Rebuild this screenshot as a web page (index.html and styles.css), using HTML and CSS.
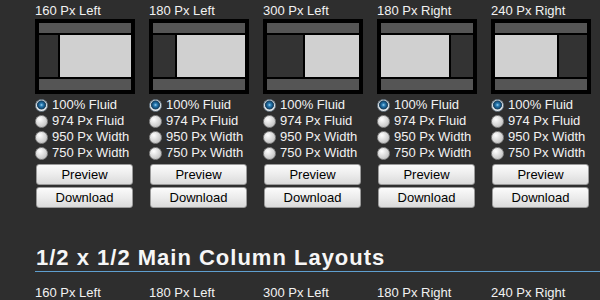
FILE: index.html
```html
<!DOCTYPE html>
<html lang="en">
<head>
    <meta charset="UTF-8">
    <title>Layouts</title>
    <link rel="stylesheet" href="styles.css">
</head>
<body>
<div id="page">
    <div class="row">
        <div class="card">
            <div class="label">160 Px Left</div>
            <div class="frame"><div class="top"></div><div class="mid"><div class="side w160"></div><div class="main"></div></div><div class="bot"></div></div>
            <ul class="opts">
                <li><input type="radio" name="a1" checked>100% Fluid</li>
                <li><input type="radio" name="a1">974 Px Fluid</li>
                <li><input type="radio" name="a1">950 Px Width</li>
                <li><input type="radio" name="a1">750 Px Width</li>
            </ul>
            <button class="btn">Preview</button>
            <button class="btn">Download</button>
        </div>
        <div class="card">
            <div class="label">180 Px Left</div>
            <div class="frame"><div class="top"></div><div class="mid"><div class="side w180"></div><div class="main"></div></div><div class="bot"></div></div>
            <ul class="opts">
                <li><input type="radio" name="a2" checked>100% Fluid</li>
                <li><input type="radio" name="a2">974 Px Fluid</li>
                <li><input type="radio" name="a2">950 Px Width</li>
                <li><input type="radio" name="a2">750 Px Width</li>
            </ul>
            <button class="btn">Preview</button>
            <button class="btn">Download</button>
        </div>
        <div class="card">
            <div class="label">300 Px Left</div>
            <div class="frame"><div class="top"></div><div class="mid"><div class="side w300"></div><div class="main"></div></div><div class="bot"></div></div>
            <ul class="opts">
                <li><input type="radio" name="a3" checked>100% Fluid</li>
                <li><input type="radio" name="a3">974 Px Fluid</li>
                <li><input type="radio" name="a3">950 Px Width</li>
                <li><input type="radio" name="a3">750 Px Width</li>
            </ul>
            <button class="btn">Preview</button>
            <button class="btn">Download</button>
        </div>
        <div class="card">
            <div class="label">180 Px Right</div>
            <div class="frame"><div class="top"></div><div class="mid right"><div class="side w180"></div><div class="main"></div></div><div class="bot"></div></div>
            <ul class="opts">
                <li><input type="radio" name="a4" checked>100% Fluid</li>
                <li><input type="radio" name="a4">974 Px Fluid</li>
                <li><input type="radio" name="a4">950 Px Width</li>
                <li><input type="radio" name="a4">750 Px Width</li>
            </ul>
            <button class="btn">Preview</button>
            <button class="btn">Download</button>
        </div>
        <div class="card">
            <div class="label">240 Px Right</div>
            <div class="frame"><div class="top"></div><div class="mid right"><div class="side w240"></div><div class="main"></div></div><div class="bot"></div></div>
            <ul class="opts">
                <li><input type="radio" name="a5" checked>100% Fluid</li>
                <li><input type="radio" name="a5">974 Px Fluid</li>
                <li><input type="radio" name="a5">950 Px Width</li>
                <li><input type="radio" name="a5">750 Px Width</li>
            </ul>
            <button class="btn">Preview</button>
            <button class="btn">Download</button>
        </div>
    </div>

    <h2 class="section">1/2 x 1/2 Main Column Layouts</h2>

    <div class="row">
        <div class="card">
            <div class="label">160 Px Left</div>
            <div class="frame"><div class="top"></div><div class="mid"><div class="side w160"></div><div class="main"></div></div><div class="bot"></div></div>
        </div>
        <div class="card">
            <div class="label">180 Px Left</div>
            <div class="frame"><div class="top"></div><div class="mid"><div class="side w180"></div><div class="main"></div></div><div class="bot"></div></div>
        </div>
        <div class="card">
            <div class="label">300 Px Left</div>
            <div class="frame"><div class="top"></div><div class="mid"><div class="side w300"></div><div class="main"></div></div><div class="bot"></div></div>
        </div>
        <div class="card">
            <div class="label">180 Px Right</div>
            <div class="frame"><div class="top"></div><div class="mid right"><div class="side w180"></div><div class="main"></div></div><div class="bot"></div></div>
        </div>
        <div class="card">
            <div class="label">240 Px Right</div>
            <div class="frame"><div class="top"></div><div class="mid right"><div class="side w240"></div><div class="main"></div></div><div class="bot"></div></div>
        </div>
    </div>
</div>
</body>
</html>
```

FILE: styles.css
```css
html, body { margin: 0; padding: 0; }
body {
    background: #2e2e2e;
    color: #f2f2f2;
    font-family: "Liberation Sans", Arial, sans-serif;
    font-size: 13px;
    overflow: hidden;
}
#page { padding: 3px 0 0 35px; }

.row { display: flex; gap: 14px; }
.card { width: 100px; display: flex; flex-direction: column; }

.label { line-height: 15px; margin-bottom: 1px; white-space: nowrap; }

.frame {
    border: 4px solid #000;
    background: #000;
    height: 67px;
    display: grid;
    grid-template-rows: 10px 42px 11px;
    row-gap: 2px;
}
.frame .top, .frame .bot { background: #555; }
.mid { display: flex; gap: 2px; }
.mid.right { flex-direction: row-reverse; }
.side { background: #333; }
.main { background: #d0d0d0; flex: 1; }
.w160 { width: 19px; }
.w180 { width: 22px; }
.w240 { width: 28px; }
.w300 { width: 36px; }

.opts { list-style: none; margin: 3px 0 0; padding: 0; }
.opts li {
    display: flex;
    align-items: center;
    gap: 4px;
    height: 16px;
    line-height: 16px;
    white-space: nowrap;
}
.opts input {
    appearance: none;
    -webkit-appearance: none;
    margin: 0;
    width: 13px;
    height: 13px;
    border-radius: 50%;
    border: 1px solid #8c8c8c;
    box-sizing: border-box;
    background: radial-gradient(circle at 35% 30%, #ffffff 0, #e4e4e4 35%, #b4b4b4 100%);
}
.opts input:checked {
    border-color: #6f7f8c;
    background: radial-gradient(circle at 50% 45%, #a6d6f2 0, #2c80b8 1.5px, #124a75 3.5px, #2a4a60 4.2px, #d6dde2 4.8px, #f2f2f2 6px);
}

.btn {
    display: block;
    width: 97px;
    height: 21px;
    margin: 3px 0 0 1px;
    padding: 0;
    border: 1px solid #9a9a9a;
    border-radius: 3px;
    background: linear-gradient(#fbfbfb, #ececec 50%, #dadada);
    color: #000;
    font-family: "Liberation Sans", Arial, sans-serif;
    font-size: 13px;
    line-height: 19px;
}
.btn + .btn { margin-top: 2px; }

.section {
    margin: 37px 0 13px;
    padding: 0 0 0 1px;
    font-size: 22px;
    line-height: 26px;
    font-weight: bold;
    letter-spacing: 1px;
    color: #f6f6f6;
    border-bottom: 1px solid #5f9fcf;
    white-space: nowrap;
}
```
